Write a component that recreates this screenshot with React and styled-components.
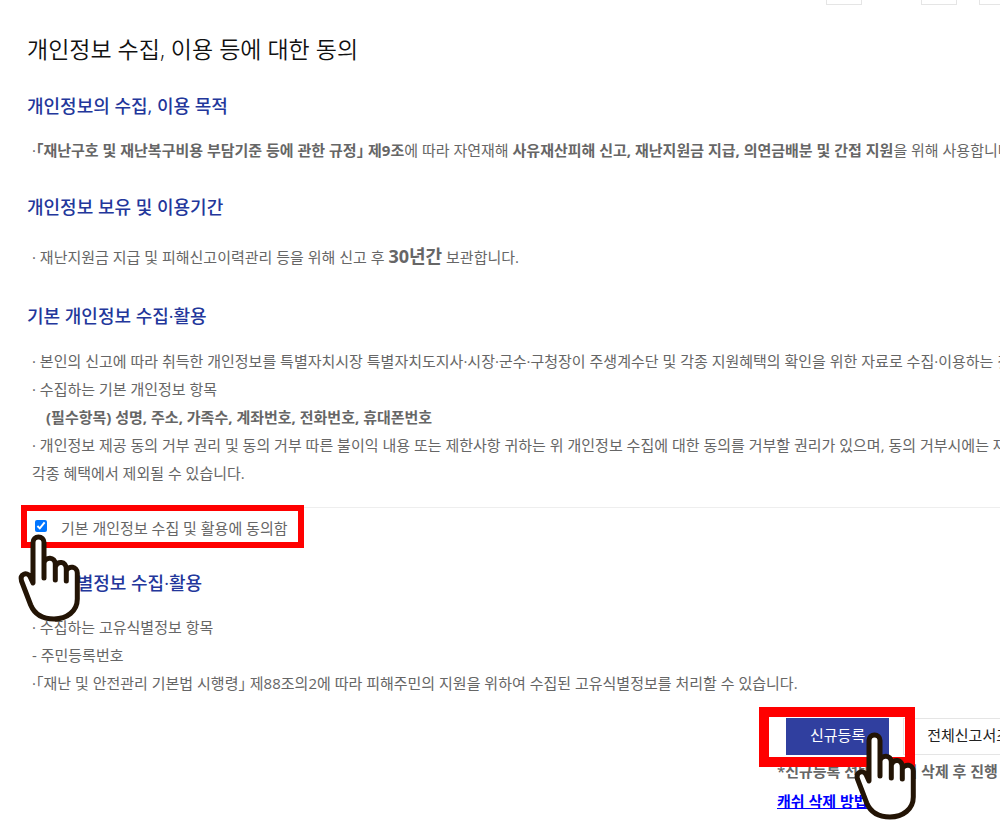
import styled, { createGlobalStyle } from "styled-components";

const GlobalStyle = createGlobalStyle`
  *, *:before, *:after {
    box-sizing: border-box;
  }
  body {
    margin: 0;
    background-color: #fff;
    color: #666;
    font-family: "Open Sans", "Noto Sans CJK KR", sans-serif;
    font-feature-settings: "halt";
    font-size: 15px;
    line-height: 28px;
  }
  h1, h2, p {
    margin: 0;
  }
`;

const StyledPage = styled.div`
  overflow: hidden;
  padding: 0 0 8px 27px;
`;

const StyledTopBar = styled.div`
  display: flex;
  justify-content: flex-end;
`;

const StyledTopBox = styled.span`
  width: ${props => props.width};
  height: 5px;
  margin-left: ${props => props.gap};
  border: 1px solid #e5e5e5;
  border-top: 0;
  border-right-width: ${props => (props.cut ? "0" : "1px")};
`;

const StyledTitle = styled.h1`
  padding-top: 28px;
  color: #111;
  font-size: 23px;
  font-weight: 350;
  line-height: 32px;
`;

const StyledSection = styled.section`
  padding-top: ${props => props.top};
`;

const StyledHeading = styled.h2`
  margin-bottom: ${props => props.bottom || "16px"};
  color: #23379b;
  font-size: 18px;
  font-weight: 500;
  line-height: 28px;
`;

const StyledText = styled.p`
  padding-left: ${props => (props.indent ? "19px" : "5px")};
  white-space: nowrap;
  strong {
    font-weight: 700;
  }
`;

const StyledPeriod = styled.strong`
  font-size: 18px;
  line-height: 1;
`;

const StyledAgree = styled.div`
  position: relative;
  display: flex;
  align-items: center;
  height: 40px;
  margin-top: 20px;
  padding-left: 8px;
  border-top: 1px solid #eee;
  input {
    width: 12px;
    height: 12px;
    margin: 0 14px 4px 0;
    accent-color: #0075ff;
  }
`;

const StyledMark = styled.span`
  position: absolute;
  top: ${props => props.top};
  left: ${props => props.left};
  width: ${props => props.width};
  height: ${props => props.height};
  border: ${props => props.line} solid #f00;
  pointer-events: none;
`;

const StyledHand = styled.svg`
  position: absolute;
  z-index: 1;
  top: ${props => props.top};
  left: ${props => props.left};
  width: 64px;
  height: 92px;
  pointer-events: none;
`;

const StyledActions = styled.div`
  position: relative;
  width: 223px;
  margin: 21px 0 0 auto;
`;

const StyledButtons = styled.div`
  display: flex;
  gap: 14px;
  padding-left: 9px;
`;

const StyledButton = styled.button`
  flex: none;
  height: 37px;
  padding: 0 23px 4px;
  border: 1px solid ${props => (props.primary ? "#303f9f" : "#e5e5e5")};
  background-color: ${props => (props.primary ? "#303f9f" : "#fff")};
  color: ${props => (props.primary ? "#fff" : "#222")};
  font-family: inherit;
  font-size: 15px;
  line-height: 28px;
  white-space: nowrap;
`;

const StyledNote = styled.p`
  padding-top: 2px;
  font-weight: 600;
  white-space: nowrap;
  a {
    color: #00f;
  }
`;

function Hand(props) {
  return (
    <StyledHand viewBox="0 0 64 92" aria-hidden="true" {...props}>
      <path
        d="M16 51V10.5a5.5 5.5 0 0 1 11 0V46V31C28 24.500 38.300 24.500 38.300 32V48V35C40 28.500 49.300 29 49.300 37V49V39C51.500 33 60.300 34.500 60.300 41V67C60.300 79 50 87 37 87C25 87 17.500 82 13.700 73L4.500 49C2.500 42 10 39.500 13 44.500Z"
        fill="#fff"
        stroke="#231405"
        strokeWidth="5"
        strokeLinecap="round"
        strokeLinejoin="round"
      />
    </StyledHand>
  );
}

function App() {
  return (
    <>
      <GlobalStyle />
      <StyledPage>
        <StyledTopBar>
          <StyledTopBox width="36px" gap="0" />
          <StyledTopBox width="36px" gap="59px" />
          <StyledTopBox width="21px" gap="22px" cut />
        </StyledTopBar>
        <StyledTitle>개인정보 수집, 이용 등에 대한 동의</StyledTitle>

        <StyledSection top="27px">
          <StyledHeading>개인정보의 수집, 이용 목적</StyledHeading>
          <StyledText>
            ·<strong>「재난구호 및 재난복구비용 부담기준 등에 관한 규정」 제9조</strong>에 따라 자연재해{" "}
            <strong>사유재산피해 신고, 재난지원금 지급, 의연금배분 및 간접 지원</strong>을 위해 사용합니다.
          </StyledText>
        </StyledSection>

        <StyledSection top="29px">
          <StyledHeading bottom="22px">개인정보 보유 및 이용기간</StyledHeading>
          <StyledText>
            · 재난지원금 지급 및 피해신고이력관리 등을 위해 신고 후 <StyledPeriod>30년간</StyledPeriod> 보관합니다.
          </StyledText>
        </StyledSection>

        <StyledSection top="31px">
          <StyledHeading bottom="17px">기본 개인정보 수집·활용</StyledHeading>
          <StyledText>
            · 본인의 신고에 따라 취득한 개인정보를 특별자치시장 특별자치도지사·시장·군수·구청장이 주생계수단 및 각종 지원혜택의 확인을 위한 자료로 수집·이용하는 것
          </StyledText>
          <StyledText>· 수집하는 기본 개인정보 항목</StyledText>
          <StyledText indent>
            <strong>(필수항목) 성명, 주소, 가족수, 계좌번호, 전화번호, 휴대폰번호</strong>
          </StyledText>
          <StyledText>
            · 개인정보 제공 동의 거부 권리 및 동의 거부 따른 불이익 내용 또는 제한사항 귀하는 위 개인정보 수집에 대한 동의를 거부할 권리가 있으며, 동의 거부시에는 재
          </StyledText>
          <StyledText>각종 혜택에서 제외될 수 있습니다.</StyledText>
          <StyledAgree>
            <input type="checkbox" id="agree" defaultChecked />
            <label htmlFor="agree">기본 개인정보 수집 및 활용에 동의함</label>
            <StyledMark top="-3px" left="-6px" width="283px" height="43px" line="6px" />
            <Hand top="24px" left="-10px" />
          </StyledAgree>
        </StyledSection>

        <StyledSection top="22px">
          <StyledHeading>고유식별정보 수집·활용</StyledHeading>
          <StyledText>· 수집하는 고유식별정보 항목</StyledText>
          <StyledText>- 주민등록번호</StyledText>
          <StyledText>
            ·「재난 및 안전관리 기본법 시행령」 제88조의2에 따라 피해주민의 지원을 위하여 수집된 고유식별정보를 처리할 수 있습니다.
          </StyledText>
        </StyledSection>

        <StyledActions>
          <StyledButtons>
            <StyledButton type="button" primary>신규등록</StyledButton>
            <StyledButton type="button">전체신고서조회</StyledButton>
          </StyledButtons>
          <StyledNote>*신규등록 선택시 캐쉬 삭제 후 진행</StyledNote>
          <StyledNote>
            <a href="#cache">캐쉬 삭제 방법</a>
          </StyledNote>
          <StyledMark top="-11px" left="-18px" width="156px" height="60px" line="10px" />
          <Hand top="12px" left="76px" />
        </StyledActions>
      </StyledPage>
    </>
  );
}

export default App;
